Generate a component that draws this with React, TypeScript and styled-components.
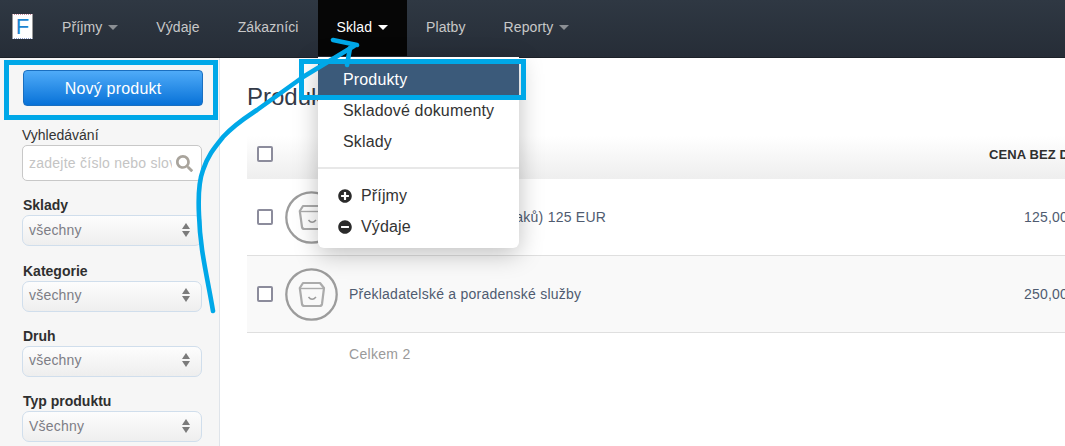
import styled, { createGlobalStyle } from "styled-components";
import { FaMinusCircle, FaPlusCircle, FaSearch } from "react-icons/fa";

const GlobalStyle = createGlobalStyle`
  html, body {
    margin: 0;
    padding: 0;
    background: #fff;
    overflow: hidden;
  }
  * {
    box-sizing: border-box;
  }
  body {
    font-family: "Liberation Sans", Arial, sans-serif;
  }
`;

function BasketIcon() {
  return (
    <Basket viewBox="0 0 53 53" width="53" height="53">
      <circle cx="26.5" cy="26.5" r="25.2" fill="none" stroke="#9c9c9c" strokeWidth="2.3" />
      <path
        d="M18 15 L35 15 L39 20 L37 36 Q36.7 38 34.5 38 L19.5 38 Q17.3 38 17 36 L14.8 20 Z"
        fill="none"
        stroke="#ababab"
        strokeWidth="2.2"
        strokeLinejoin="round"
      />
      <path d="M15 20.5 L39 20.5" stroke="#ababab" strokeWidth="1.4" />
      <path d="M23.5 29 Q27 33.5 31 29" fill="none" stroke="#9c9c9c" strokeWidth="1.5" />
    </Basket>
  );
}

function Annotations() {
  return (
    <ArrowLayer viewBox="0 0 1065 446" width="1065" height="446">
      <g fill="none" stroke="#00a8e8" strokeWidth="4.6" strokeLinecap="round" strokeLinejoin="round">
        <path d="M213 311 C207 275 200 250 199 215 C198 195 200 178 203 170 C208 155 215 147 223 137 C235 124 245 118 257 110 L303 77 L354 46" />
        <path d="M333 40 L357 45" />
        <path d="M347 65 L350 48" />
      </g>
    </ArrowLayer>
  );
}

const filters = [
  { label: "Sklady", value: "všechny" },
  { label: "Kategorie", value: "všechny" },
  { label: "Druh", value: "všechny" },
  { label: "Typ produktu", value: "Všechny" },
];

export default function App() {
  return (
    <Page>
      <GlobalStyle />
      <Navbar>
        <Logo>F</Logo>
        <NavItem>
          Příjmy <Caret />
        </NavItem>
        <NavItem>Výdaje</NavItem>
        <NavItem>Zákazníci</NavItem>
        <NavItem $active>
          Sklad <Caret $light />
        </NavItem>
        <NavItem>Platby</NavItem>
        <NavItem>
          Reporty <Caret />
        </NavItem>
      </Navbar>
      <Body>
        <Sidebar>
          <PrimaryButton>Nový produkt</PrimaryButton>
          <SearchLabel>Vyhledávání</SearchLabel>
          <SearchBox>
            <Placeholder>zadejte číslo nebo slovo</Placeholder>
            <SearchIcon />
          </SearchBox>
          {filters.map((f) => (
            <Filter key={f.label}>
              <FilterLabel>{f.label}</FilterLabel>
              <Select>
                {f.value}
                <SelectArrows>
                  <ArrowUp />
                  <ArrowDown />
                </SelectArrows>
              </Select>
            </Filter>
          ))}
        </Sidebar>
        <Main>
          <Title>Produkty</Title>
          <TableHead>
            <Checkbox />
            <PriceHead>CENA BEZ DPH</PriceHead>
          </TableHead>
          <Row>
            <Checkbox />
            <BasketIcon />
            <Name>Vzdělávací služby (od Polaků) 125 EUR</Name>
            <Price>125,00</Price>
          </Row>
          <Row $shaded>
            <Checkbox />
            <BasketIcon />
            <Name>Překladatelské a poradenské služby</Name>
            <Price>250,00</Price>
          </Row>
          <Total>Celkem 2</Total>
        </Main>
      </Body>
      <Dropdown>
        <MenuItem $selected>Produkty</MenuItem>
        <MenuItem>Skladové dokumenty</MenuItem>
        <MenuItem>Sklady</MenuItem>
        <Divider />
        <ActionItem>
          <FaPlusCircle size={14} />
          Příjmy
        </ActionItem>
        <ActionItem>
          <FaMinusCircle size={14} />
          Výdaje
        </ActionItem>
      </Dropdown>
      <ButtonHighlight />
      <MenuHighlight />
      <Annotations />
    </Page>
  );
}

const Page = styled.div`
  position: relative;
  width: 1065px;
  height: 446px;
  overflow: hidden;
`;
const Navbar = styled.div`
  display: flex;
  align-items: flex-start;
  height: 58px;
  padding-left: 12px;
  background: linear-gradient(#2f3843, #262d37);
  border-bottom: 1px solid #1c2128;
`;
const Logo = styled.div`
  width: 21px;
  height: 25px;
  margin: 14px 10px 0 0;
  background: #fff;
  border-top: 1px dotted #c88a9c;
  border-bottom: 1px dotted #8a9cc8;
  border-left: 1px solid #9a9a9a;
  border-right: 1px solid #9a9a9a;
  color: #1a84d0;
  font-size: 22px;
  line-height: 23px;
  text-align: center;
`;
const NavItem = styled.div<{ $active?: boolean }>`
  display: flex;
  align-items: center;
  gap: 6px;
  height: 56px;
  padding: 0 19px 2px;
  font-size: 14px;
  letter-spacing: 0.1px;
  color: ${(p) => (p.$active ? "#fff" : "#c8c8c8")};
  background: ${(p) => (p.$active ? "#060606" : "transparent")};
`;
const Caret = styled.span<{ $light?: boolean }>`
  width: 0;
  height: 0;
  margin-top: 1px;
  border-left: 5px solid transparent;
  border-right: 5px solid transparent;
  border-top: 5px solid ${(p) => (p.$light ? "#fff" : "#8b8f94")};
`;
const Body = styled.div`
  display: flex;
  height: 388px;
`;
const Sidebar = styled.div`
  width: 220px;
  flex-shrink: 0;
  padding: 12px 17px 0 22px;
  background: #f6f6f6;
  border-right: 1px solid #dfe4ea;
`;
const PrimaryButton = styled.div`
  width: 180px;
  height: 36px;
  margin-left: 1px;
  border: 1px solid #1a6fc0;
  border-radius: 4px;
  background: linear-gradient(#4fabf8, #0872d8);
  color: #fff;
  font-size: 16px;
  letter-spacing: 0.2px;
  line-height: 35px;
  text-align: center;
`;
const SearchLabel = styled.div`
  margin-top: 21px;
  font-size: 14px;
  line-height: 16px;
  color: #333;
`;
const SearchBox = styled.div`
  display: flex;
  align-items: center;
  justify-content: space-between;
  width: 180px;
  height: 36px;
  margin-top: 2px;
  padding: 0 8px 0 6px;
  background: #fff;
  border: 1px solid #c8c8c8;
  border-radius: 5px;
`;
const Placeholder = styled.div`
  width: 143px;
  overflow: hidden;
  white-space: nowrap;
  font-size: 14px;
  letter-spacing: 0.25px;
  color: #c4c4c4;
`;
const SearchIcon = styled(FaSearch)`
  width: 17px;
  height: 17px;
  color: #a9a49c;
`;
const Filter = styled.div`
  margin-top: 16.33px;
`;
const FilterLabel = styled.div`
  font-size: 14px;
  font-weight: bold;
  line-height: 16px;
  margin-bottom: 2px;
  padding-left: 1px;
  color: #2f2f2f;
`;
const Select = styled.div`
  display: flex;
  align-items: center;
  justify-content: space-between;
  width: 180px;
  height: 31px;
  padding: 0 11px 2px 6px;
  border: 1px solid #d0deec;
  border-radius: 7px;
  background: linear-gradient(#fdfdfd, #eeeeee);
  font-size: 14px;
  letter-spacing: 0.2px;
  color: #7d7d85;
`;
const SelectArrows = styled.div`
  display: flex;
  flex-direction: column;
  gap: 2px;
`;
const ArrowUp = styled.span`
  width: 0;
  height: 0;
  border-left: 4px solid transparent;
  border-right: 4px solid transparent;
  border-bottom: 6px solid #7b7b7b;
`;
const ArrowDown = styled.span`
  width: 0;
  height: 0;
  border-left: 4px solid transparent;
  border-right: 4px solid transparent;
  border-top: 6px solid #7b7b7b;
`;
const Main = styled.div`
  flex: 1;
  padding: 0 0 0 27px;
  overflow: hidden;
`;
const Title = styled.div`
  margin-top: 26px;
  height: 26px;
  font-size: 24px;
  line-height: 26px;
  color: #333a48;
`;
const TableHead = styled.div`
  display: flex;
  align-items: center;
  width: 900px;
  height: 43px;
  margin-top: 26px;
  padding: 0 0 7px 10px;
  background: linear-gradient(#fff, #eeeeee);
`;
const Checkbox = styled.span`
  display: block;
  flex-shrink: 0;
  width: 16px;
  height: 16px;
  background: #fff;
  border: 2px solid #8c8c9c;
  border-radius: 2px;
`;
const PriceHead = styled.div`
  margin-left: 716px;
  font-size: 13px;
  font-weight: bold;
  letter-spacing: 0.1px;
  white-space: nowrap;
  color: #2f2f2f;
`;
const Row = styled.div<{ $shaded?: boolean }>`
  display: flex;
  align-items: center;
  width: 900px;
  height: 77px;
  padding-left: 10px;
  background: ${(p) => (p.$shaded ? "#f9f9f9" : "#fff")};
  border-bottom: 1px solid #dfdfdf;
`;
const Basket = styled.svg`
  flex-shrink: 0;
  margin: 0 11px 0 12px;
`;
const Name = styled.div`
  width: 619px;
  font-size: 14px;
  letter-spacing: 0.24px;
  white-space: nowrap;
  color: #4f5b70;
`;
const Price = styled.div`
  width: 100px;
  text-align: right;
  font-size: 14px;
  letter-spacing: 0.2px;
  color: #4f5b70;
`;
const Total = styled.div`
  margin: 13px 0 0 102px;
  font-size: 14px;
  letter-spacing: 0.3px;
  color: #9a9a9a;
`;
const Dropdown = styled.div`
  position: absolute;
  left: 318px;
  top: 57px;
  width: 201px;
  height: 191px;
  padding-top: 7px;
  background: #fff;
  border-radius: 0 0 6px 6px;
  box-shadow: 0 6px 24px rgba(0, 0, 0, 0.25);
`;
const MenuItem = styled.div<{ $selected?: boolean }>`
  height: 31px;
  padding-left: 25px;
  font-size: 16px;
  letter-spacing: 0.15px;
  line-height: 31px;
  color: ${(p) => (p.$selected ? "#fff" : "#333")};
  background: ${(p) => (p.$selected ? "#3b5a7a" : "transparent")};
`;
const Divider = styled.div`
  height: 2px;
  margin: 10px 0 11px;
  background: #e8e8e8;
`;
const ActionItem = styled.div`
  display: flex;
  align-items: center;
  gap: 9px;
  height: 31px;
  padding-left: 20px;
  font-size: 16px;
  letter-spacing: 0.15px;
  color: #333;
  svg {
    color: #2b2b2b;
  }
`;
const ButtonHighlight = styled.div`
  position: absolute;
  left: 4px;
  top: 60px;
  width: 214px;
  height: 60px;
  border: 5px solid #00a8e8;
`;
const MenuHighlight = styled.div`
  position: absolute;
  left: 299px;
  top: 59px;
  width: 227px;
  height: 41px;
  border: 5px solid #00a8e8;
`;
const ArrowLayer = styled.svg`
  position: absolute;
  left: 0;
  top: 0;
  pointer-events: none;
`;
